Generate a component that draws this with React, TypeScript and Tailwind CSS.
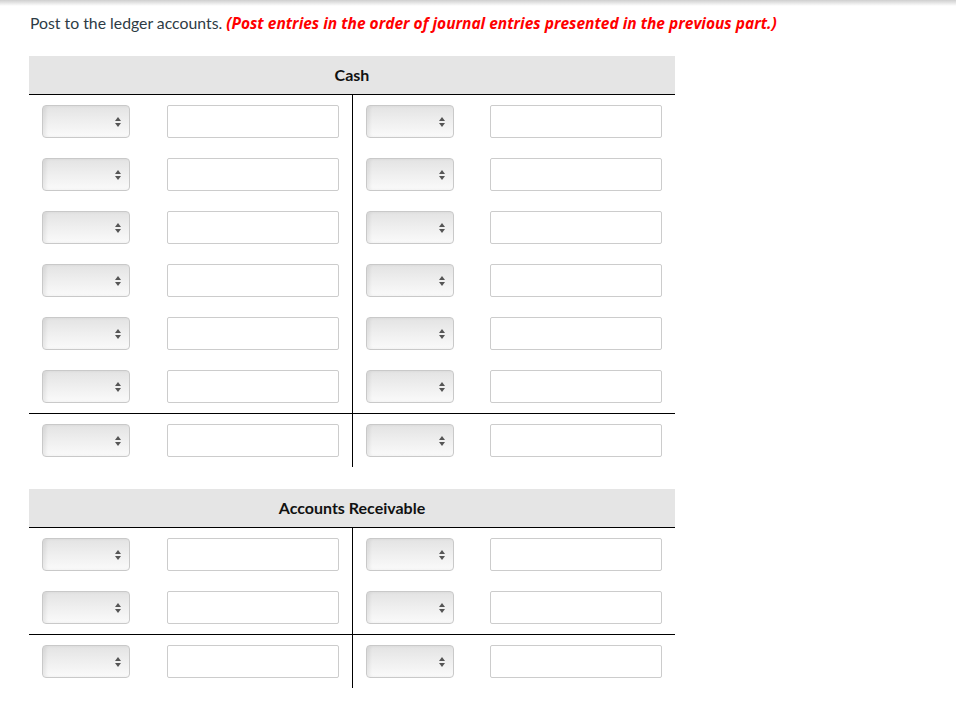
import React from 'react'

const ledgers = [
  { id: 'cash', title: 'Cash', top: 6, bottom: 1 },
  { id: 'ar', title: 'Accounts Receivable', top: 2, bottom: 1 },
]

function SelectBox() {
  return (
    <div className="relative h-[33px] w-[88px] rounded-[4px] border border-[#c9c9c9] bg-gradient-to-b from-[#e3e3e3] via-[#efefef] to-[#fafafa] shadow-[inset_3px_0_3px_rgba(0,0,0,0.06)]">
      <svg
        className="absolute right-[8px] top-[11px]"
        width="6"
        height="10"
        viewBox="0 0 6 10"
      >
        <path d="M3 0 L6 4 L0 4 Z" fill="#555" />
        <path d="M0 6 L6 6 L3 10 Z" fill="#555" />
      </svg>
    </div>
  )
}

function Cell() {
  return (
    <div className="flex items-center justify-between px-[13px] py-[10px]">
      <SelectBox />
      <div className="h-[33px] w-[172px] rounded-[2px] border border-[#cccccc] bg-white" />
    </div>
  )
}

function Rows({ count }: { count: number }) {
  return (
    <div className="flex">
      <div className="w-[324px] border-r border-black">
        {Array.from({ length: count }).map((_, i) => (
          <Cell key={i} />
        ))}
      </div>
      <div className="flex-1">
        {Array.from({ length: count }).map((_, i) => (
          <Cell key={i} />
        ))}
      </div>
    </div>
  )
}

function TAccount({ title, top, bottom }: { title: string; top: number; bottom: number }) {
  return (
    <div className="w-[646px]">
      <div className="flex h-[39px] items-center justify-center border-b border-black bg-[#e5e5e5] text-[16px] font-bold text-[#111]">
        {title}
      </div>
      <Rows count={top} />
      <div className="border-t border-black" />
      <Rows count={bottom} />
    </div>
  )
}

export default function App() {
  return (
    <div
      className="min-h-[703px] w-[956px] bg-white"
      style={{ fontFamily: 'Lato, "Open Sans", sans-serif' }}
    >
      <div className="h-[6px] bg-gradient-to-b from-[#cfcfcf] to-white" />
      <p className="ml-[30px] mt-[7px] text-[15.8px] leading-[20px] text-[#2d3b45]">
        Post to the ledger accounts.{' '}
        <span
          className="text-[15.5px] font-bold italic text-[#ff0000]"
          style={{ fontFamily: '"Open Sans", sans-serif' }}
        >
          (Post entries in the order of journal entries presented in the previous part.)
        </span>
      </p>
      <div className="ml-[29px] mt-[23px] flex flex-col gap-[22px]">
        {ledgers.map((l) => (
          <TAccount key={l.id} title={l.title} top={l.top} bottom={l.bottom} />
        ))}
      </div>
    </div>
  )
}
